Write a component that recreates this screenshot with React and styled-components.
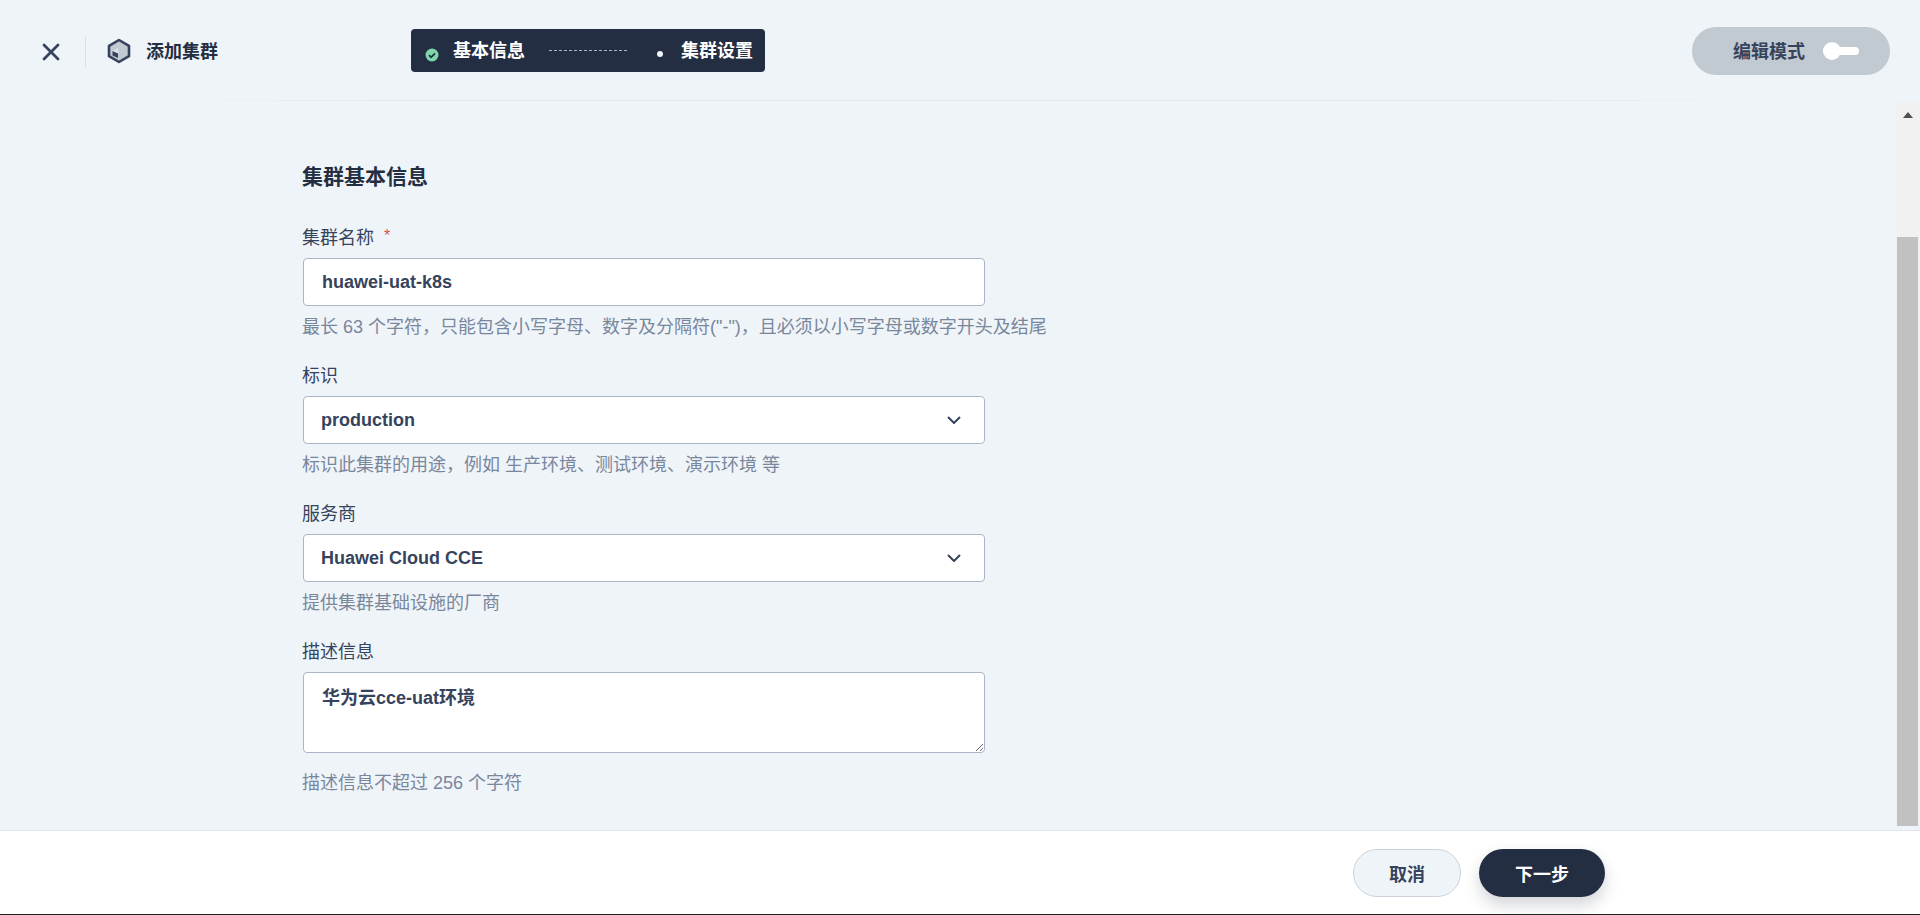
import styled, { createGlobalStyle } from 'styled-components';

const GlobalStyle = createGlobalStyle`
  html,
  body {
    margin: 0;
    height: 100%;
    overflow: hidden;
  }
  body {
    background: #eff4f9;
    font-family: "Liberation Sans", "Noto Sans CJK SC", sans-serif;
    font-size: 18px;
    color: #36435c;
  }
  * {
    box-sizing: border-box;
  }
`;

const Page = styled.div`
  display: flex;
  flex-direction: column;
  height: 915px;
  border-bottom: 1px solid #222;
`;

const Header = styled.header`
  display: flex;
  flex: 0 0 100px;
  align-items: center;
  padding: 2px 30px 0 42px;
`;

const HeaderLine = styled.div`
  flex: 0 0 1px;
  background: linear-gradient(90deg, #eff4f9 8%, #e4e9ef 20%, #e4e9ef 80%, #eff4f9 92%);
`;

const TitleGroup = styled.div`
  display: flex;
  flex: 0 0 369px;
  align-items: center;
`;

const CloseButton = styled.div`
  display: flex;
  width: 18px;
  height: 18px;
  margin-top: 2px;
  color: #36435c;
`;

const Divider = styled.div`
  width: 1px;
  height: 30px;
  margin: 2px 21px 0 25px;
  background: #d8dee5;
`;

const PageTitle = styled.div`
  margin: 2px 0 0 15px;
  font-weight: 700;
  line-height: 26px;
  color: #242e42;
`;

const Steps = styled.div`
  display: flex;
  align-items: center;
  width: 354px;
  height: 43px;
  margin-top: -1px;
  padding: 0 12px 0 14px;
  border-radius: 4px;
  background: #242e42;
  color: #fff;
  font-weight: 700;
`;

const StepText = styled.span`
  margin-left: ${(p) => p.$gap}px;
  line-height: 26px;
`;

const StepDots = styled.div`
  width: 78px;
  height: 0;
  margin-left: 24px;
  border-top: 1px dashed #a9b4c0;
`;

const StepDot = styled.div`
  width: 6px;
  height: 6px;
  margin: 7px 0 0 30px;
  border-radius: 50%;
  background: #eff4f9;
`;

const StepCheck = styled.svg`
  flex: none;
  margin-top: 8px;
`;

const EditMode = styled.div`
  display: flex;
  align-items: center;
  width: 198px;
  height: 48px;
  margin-left: auto;
  padding-left: 41px;
  border-radius: 24px;
  background: #c1c9d1;
`;

const EditLabel = styled.span`
  margin-top: -2px;
  font-weight: 700;
`;

const ToggleTrack = styled.div`
  position: relative;
  width: 36px;
  height: 8px;
  margin-left: 18px;
  border-radius: 4px;
  background: #fff;
`;

const ToggleKnob = styled.div`
  position: absolute;
  top: -5px;
  left: 0;
  width: 18px;
  height: 18px;
  border-radius: 50%;
  background: #fff;
`;

const Main = styled.main`
  display: flex;
  flex: 1;
  min-height: 0;
`;

const Content = styled.div`
  flex: 1;
  padding: 62px 0 0 303px;
`;

const SectionTitle = styled.h2`
  margin: 0 0 32px -1px;
  font-size: 21px;
  font-weight: 700;
  line-height: 28px;
  color: #242e42;
`;

const Form = styled.div`
  display: flex;
  flex-direction: column;
  gap: 21px;
  width: 682px;
`;

const Field = styled.div`
  display: flex;
  flex-direction: column;
  white-space: nowrap;
`;

const Label = styled.label`
  margin: 2px 0 7px -1px;
  line-height: 26px;
`;

const Required = styled.span`
  margin-left: 10px;
  line-height: 0;
  vertical-align: 3px;
  font-size: 16px;
  color: #d8524e;
`;

const Hint = styled.div`
  margin: ${(p) => p.$top || 8}px 0 0 -1px;
  line-height: 26px;
  color: #79879c;
`;

const TextInput = styled.input`
  display: block;
  width: 100%;
  height: 48px;
  padding: 0 18px;
  border: 1px solid #abb5c7;
  border-radius: 4px;
  outline: none;
  background: #fff;
  font: 700 18px "Liberation Sans", "Noto Sans CJK SC", sans-serif;
  color: #36435c;
`;

const Select = styled.div`
  display: flex;
  align-items: center;
  justify-content: space-between;
  height: 48px;
  padding: 0 23px 0 17px;
  border: 1px solid #abb5c7;
  border-radius: 4px;
  background: #fff;
  font-weight: 700;
`;

const TextArea = styled.textarea`
  display: block;
  width: 100%;
  height: 81px;
  padding: 12px 18px;
  border: 1px solid #abb5c7;
  border-radius: 4px;
  outline: none;
  background: #fff;
  font: 700 18px/26px "Liberation Sans", "Noto Sans CJK SC", sans-serif;
  color: #36435c;
`;

const ScrollBar = styled.div`
  display: flex;
  flex: 0 0 24px;
  flex-direction: column;
  justify-content: space-between;
  height: 724px;
  margin-top: 1px;
  background: #f1f1f1;
`;

const ScrollArrow = styled.div`
  width: 0;
  height: 0;
  margin: 10px auto 0;
  border-right: 5.5px solid transparent;
  border-bottom: 6px solid #505050;
  border-left: 5.5px solid transparent;
`;

const ScrollThumb = styled.div`
  width: 21px;
  height: 589px;
  margin-left: 1px;
  background: #c1c1c1;
`;

const Footer = styled.footer`
  display: flex;
  flex: 0 0 84px;
  align-items: flex-start;
  justify-content: flex-end;
  gap: 18px;
  padding: 18px 315px 0 0;
  border-top: 1px solid #dde3ea;
  background: #fff;
`;

const Button = styled.button`
  height: 48px;
  padding: 0 ${(p) => (p.$primary ? 36 : 35)}px;
  border: ${(p) => (p.$primary ? 'none' : '1px solid #ccd3db')};
  border-radius: 24px;
  background: ${(p) => (p.$primary ? '#242e42' : '#eff4f9')};
  box-shadow: ${(p) => (p.$primary ? '0 8px 16px 0 rgba(36, 46, 66, 0.2)' : 'none')};
  font: 700 18px "Liberation Sans", "Noto Sans CJK SC", sans-serif;
  color: ${(p) => (p.$primary ? '#fff' : '#36435c')};
`;

const CloseIcon = () => (
  <svg width="18" height="18" viewBox="0 0 18 18" fill="none" stroke="currentColor" strokeWidth="2.8" strokeLinecap="round">
    <path d="M2 2l14 14M16 2L2 16" />
  </svg>
);

const ClusterIcon = () => (
  <svg width="24" height="26" viewBox="0 0 24 26">
    <path d="M12 2l10 5.8v10.4L12 24 2 18.2V7.8z" fill="#c1c9d1" stroke="#36435c" strokeWidth="2.6" strokeLinejoin="round" />
    <path d="M5.5 13l5.5 2.5V20l-5.5-2.5z" fill="#36435c" />
    <path d="M5.5 13L11 10l1 5.5z" fill="#d8dee5" />
  </svg>
);

const CheckIcon = () => (
  <StepCheck width="14" height="14" viewBox="0 0 14 14">
    <circle cx="7" cy="7" r="6.5" fill="#7fd6ac" />
    <path d="M4 7.2l2.1 2.1L10 5.3" fill="none" stroke="#242e42" strokeWidth="1.7" />
  </StepCheck>
);

const ChevronIcon = () => (
  <svg width="14" height="8" viewBox="0 0 14 8" fill="none" stroke="#36435c" strokeWidth="2">
    <path d="M1 1l6 6 6-6" />
  </svg>
);

const App = () => {
  return (
    <Page>
      <GlobalStyle />
      <Header>
        <TitleGroup>
          <CloseButton>
            <CloseIcon />
          </CloseButton>
          <Divider />
          <ClusterIcon />
          <PageTitle>添加集群</PageTitle>
        </TitleGroup>
        <Steps>
          <CheckIcon />
          <StepText $gap={14}>基本信息</StepText>
          <StepDots />
          <StepDot />
          <StepText $gap={18}>集群设置</StepText>
        </Steps>
        <EditMode>
          <EditLabel>编辑模式</EditLabel>
          <ToggleTrack>
            <ToggleKnob />
          </ToggleTrack>
        </EditMode>
      </Header>
      <HeaderLine />
      <Main>
        <Content>
          <SectionTitle>集群基本信息</SectionTitle>
          <Form>
            <Field>
              <Label>
                集群名称<Required>*</Required>
              </Label>
              <TextInput defaultValue="huawei-uat-k8s" />
              <Hint>最长 63 个字符，只能包含小写字母、数字及分隔符("-")，且必须以小写字母或数字开头及结尾</Hint>
            </Field>
            <Field>
              <Label>标识</Label>
              <Select>
                production
                <ChevronIcon />
              </Select>
              <Hint>标识此集群的用途，例如 生产环境、测试环境、演示环境 等</Hint>
            </Field>
            <Field>
              <Label>服务商</Label>
              <Select>
                Huawei Cloud CCE
                <ChevronIcon />
              </Select>
              <Hint>提供集群基础设施的厂商</Hint>
            </Field>
            <Field>
              <Label>描述信息</Label>
              <TextArea defaultValue="华为云cce-uat环境" />
              <Hint $top={17}>描述信息不超过 256 个字符</Hint>
            </Field>
          </Form>
        </Content>
        <ScrollBar>
          <ScrollArrow />
          <ScrollThumb />
        </ScrollBar>
      </Main>
      <Footer>
        <Button>取消</Button>
        <Button $primary>下一步</Button>
      </Footer>
    </Page>
  );
};

export default App;
